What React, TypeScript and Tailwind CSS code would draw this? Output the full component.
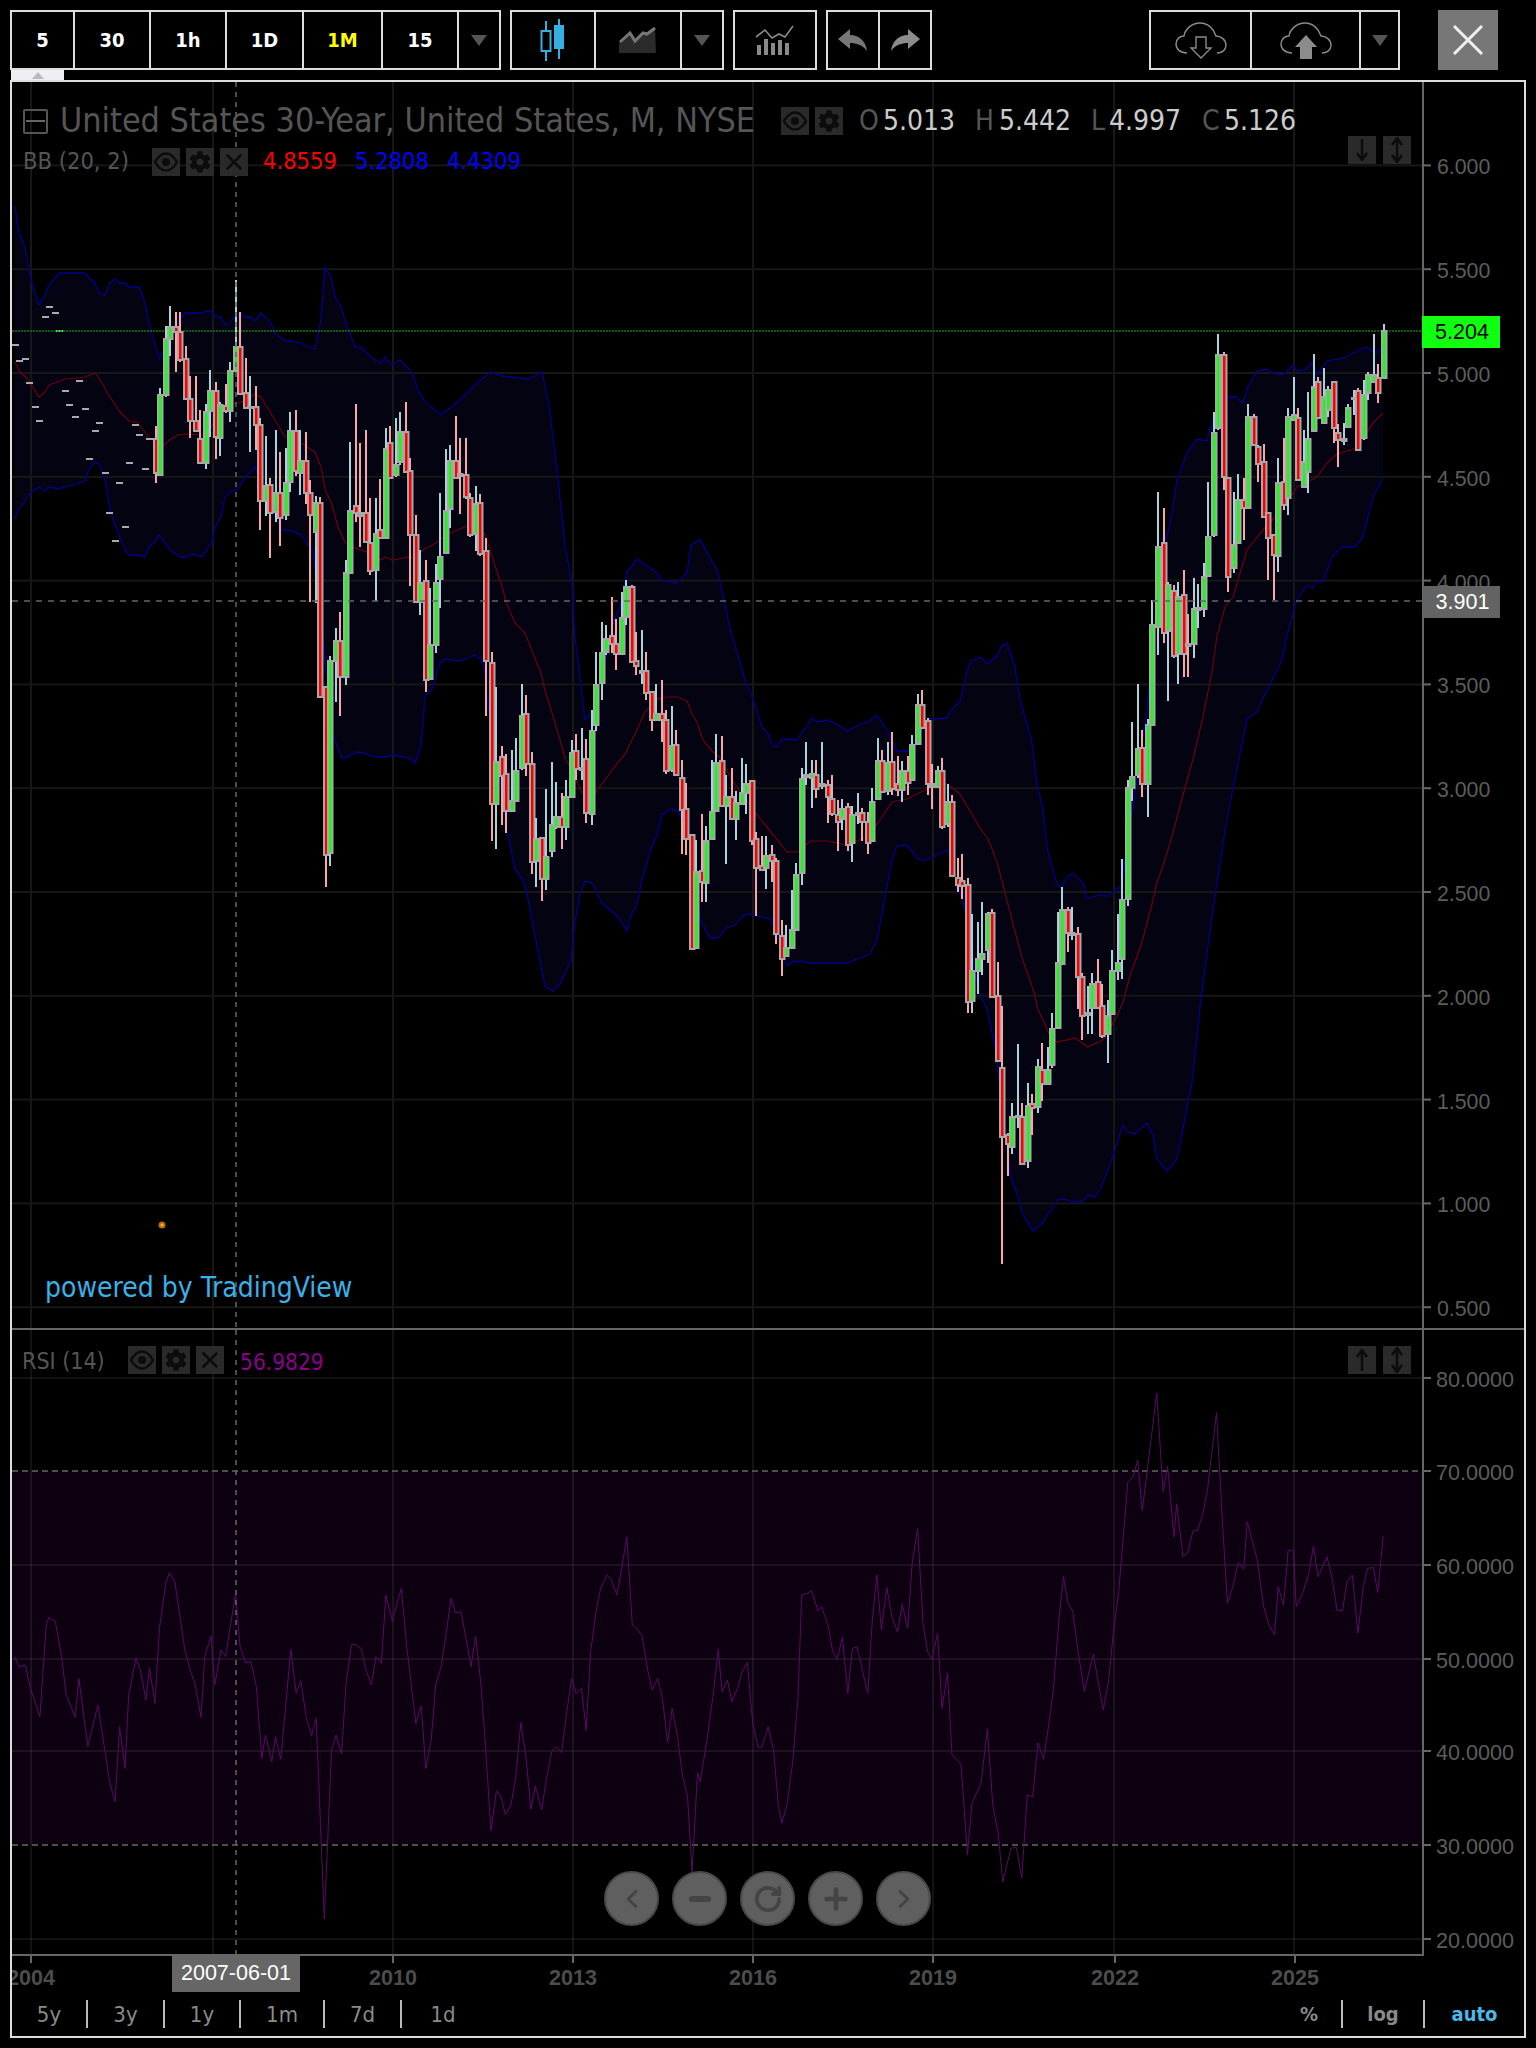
import React from "react";
import { ChevronLeft, ChevronRight, Minus, Plus, RotateCw, X } from "lucide-react";
import { FaCog } from "react-icons/fa";

const C: number[][] = [
[426,439,473,483,0],[388,395,475,475,1],[326,339,395,397,1],[306,327,339,356,1],[312,327,332,372,0],[312,332,360,362,0],[346,359,399,399,0],[376,399,421,438,0],[376,421,431,432,0],[410,439,463,463,0],
[404,412,463,469,1],[370,391,411,437,1],[382,391,437,459,0],[402,405,438,456,1],[384,406,411,413,0],[362,371,411,422,1],[280,347,371,371,1],[312,347,394,394,0],[358,393,408,408,0],[376,407,408,452,1],
[386,407,425,450,0],[418,425,501,530,0],[436,486,501,516,1],[478,485,513,558,0],[430,493,512,522,1],[452,493,518,546,0],[448,483,515,520,1],[412,431,482,492,1],[410,431,471,476,0],[430,461,473,495,1],
[432,461,493,504,0],[480,493,515,602,0],[496,503,532,603,1],[497,503,697,697,0],[687,687,855,887,0],[656,661,853,866,1],[628,641,661,702,1],[612,641,677,716,0],[560,573,677,685,1],[442,511,573,573,1],
[404,506,513,522,0],[443,513,516,547,0],[430,513,542,542,0],[498,543,571,575,0],[498,534,570,601,1],[479,530,538,538,0],[428,449,538,538,1],[426,443,478,478,0],[418,465,475,477,1],[412,432,462,465,1],
[402,432,472,472,0],[458,471,535,586,0],[515,535,602,602,0],[550,583,602,615,1],[560,581,680,692,0],[588,645,679,679,1],[564,583,645,653,1],[493,557,579,608,1],[449,511,553,553,1],[445,461,509,528,1],
[416,461,478,478,0],[438,474,476,514,0],[438,475,497,499,0],[493,498,535,537,0],[486,504,534,551,1],[494,503,554,556,0],[538,551,661,716,0],[652,663,804,841,0],[687,762,804,849,1],[746,757,776,825,0],
[754,774,811,833,0],[750,801,811,811,1],[738,771,801,801,1],[684,716,768,770,1],[695,714,764,776,0],[752,764,862,874,0],[818,839,861,887,1],[838,838,879,901,0],[789,857,879,890,1],[762,825,851,857,1],
[782,817,827,829,1],[793,817,827,849,0],[780,797,827,840,1],[740,753,797,797,1],[734,751,769,780,0],[728,768,770,780,1],[739,759,813,823,0],[710,731,814,825,1],[652,685,725,731,1],[622,653,683,700,1],
[625,639,652,655,1],[597,636,644,653,0],[619,644,654,670,0],[592,618,654,654,1],[580,587,617,625,1],[585,587,662,662,0],[632,661,666,675,0],[630,671,673,684,1],[652,671,693,700,0],[692,692,720,731,0],
[684,714,720,720,1],[680,714,720,742,0],[710,720,771,774,0],[706,746,770,772,1],[730,745,775,775,0],[760,778,810,854,0],[783,809,839,855,0],[835,835,949,949,0],[840,872,948,948,1],[814,871,882,902,0],
[826,841,883,902,1],[760,812,839,839,1],[734,763,811,811,1],[736,761,806,806,0],[775,797,806,864,1],[768,797,819,819,0],[791,803,819,840,1],[758,793,804,804,1],[764,784,793,814,1],[781,781,841,845,0],
[832,839,868,916,0],[836,866,870,871,0],[836,856,868,889,1],[845,855,861,882,0],[858,861,934,944,0],[920,936,959,976,0],[925,948,956,956,1],[890,930,948,948,1],[863,875,930,930,1],[768,779,873,885,1],
[742,775,777,785,1],[760,774,778,808,1],[760,775,789,798,0],[742,784,786,789,1],[780,785,797,823,0],[775,799,814,816,0],[800,815,822,851,0],[799,809,819,830,1],[803,807,845,851,0],[806,815,843,862,1],
[793,813,815,824,1],[808,813,822,841,0],[812,822,843,854,0],[788,802,841,841,1],[738,761,799,799,1],[750,761,792,792,0],[742,763,791,795,1],[732,762,789,795,0],[756,784,790,796,0],[761,771,790,802,1],
[756,771,783,795,0],[735,745,780,780,1],[694,705,744,744,1],[690,705,728,728,0],[718,721,784,795,0],[764,784,787,809,0],[766,771,787,787,1],[758,771,827,829,0],[784,802,824,827,1],[795,802,876,876,0],
[858,878,885,892,0],[854,881,886,899,0],[878,885,1002,1013,0],[914,971,1001,1013,1],[922,959,971,994,1],[902,954,959,975,1],[912,914,950,963,1],[909,913,997,997,0],[962,996,1061,1061,0],[1006,1068,1137,1264,0],
[1133,1135,1144,1176,0],[1103,1117,1147,1154,1],[1044,1116,1117,1128,1],[1103,1117,1164,1165,0],[1083,1106,1161,1168,1],[1094,1104,1108,1135,0],[1059,1067,1107,1113,1],[1043,1070,1084,1101,0],[1047,1070,1084,1084,1],[1013,1029,1065,1068,1],
[912,963,1028,1028,1],[887,910,964,964,1],[907,910,933,952,0],[907,933,935,940,1],[927,934,977,1009,0],[973,977,1016,1040,0],[986,1013,1015,1034,1],[973,984,1008,1034,1],[959,982,1008,1008,0],[984,1006,1036,1038,0],
[1000,1016,1034,1063,1],[950,971,1014,1014,1],[914,963,971,980,1],[859,900,959,979,1],[780,788,899,906,1],[722,777,788,801,1],[684,749,775,778,1],[730,748,784,797,0],[719,725,784,817,1],[600,625,725,725,1],
[492,547,627,655,1],[508,543,633,643,0],[582,585,631,701,1],[585,591,656,658,0],[582,597,654,684,1],[570,595,654,677,0],[614,644,646,677,0],[578,609,644,658,1],[584,608,610,628,1],[563,577,609,617,1],
[482,537,576,576,1],[412,433,535,537,1],[334,355,428,430,1],[352,355,477,490,0],[478,478,577,592,0],[492,545,568,573,1],[474,500,543,543,1],[478,500,508,540,0],[404,417,508,508,1],[414,417,445,445,0],
[445,447,464,482,0],[444,462,517,517,0],[513,513,538,580,0],[535,535,555,600,0],[458,483,556,572,1],[438,482,505,510,0],[408,417,498,515,1],[377,415,420,420,1],[408,418,480,480,0],[430,462,487,487,1],
[392,439,472,493,1],[354,387,431,431,1],[377,382,418,418,0],[368,397,423,423,1],[386,390,410,417,1],[381,382,428,443,0],[424,433,440,467,0],[423,439,441,445,1],[404,408,427,427,1],[390,398,399,415,1],
[388,391,450,451,0],[380,395,438,440,1],[372,375,393,400,1],[334,375,382,383,1],[364,378,393,403,0],[324,331,378,378,1],
];

const DASHES: number[][] = [[15,345],[19,361],[25,359],[29,383],[35,407],[39,421],[45,317],[49,307],[55,313],[59,331],[65,391],[69,405],[75,417],[79,381],[85,409],[89,459],[95,431],[99,423],[105,473],[109,513],[115,541],[119,483],[125,527],[129,463],[135,425],[139,435],[145,469],[149,439]];

const UP: number[][] = [[15,206],[19,232],[25,248],[29,270],[33,287],[39,305],[45,295],[49,285],[59,273],[85,273],[89,278],[95,283],[99,293],[105,295],[110,283],[115,279],[119,283],[125,283],[129,287],[139,287],[145,303],[149,323],[159,359],[165,347],[170,328],[175,325],[185,313],[202,313],[206,311],[211,311],[215,316],[221,317],[225,325],[230,323],[236,314],[241,314],[245,317],[251,317],[255,321],[261,313],[271,323],[275,333],[285,341],[291,341],[301,343],[309,347],[315,349],[321,320],[325,267],[331,277],[335,297],[341,307],[346,323],[355,347],[360,347],[375,360],[381,363],[385,357],[391,365],[400,360],[412,372],[418,390],[425,402],[441,415],[460,400],[475,385],[490,372],[503,376],[529,379],[542,372],[549,405],[557,471],[565,546],[572,582],[575,637],[585,720],[593,710],[605,661],[613,623],[620,606],[627,572],[637,559],[647,566],[657,573],[662,581],[677,583],[687,573],[691,545],[700,540],[708,554],[717,570],[720,582],[730,628],[745,680],[753,699],[762,727],[768,734],[772,745],[777,747],[780,741],[787,739],[797,740],[812,718],[817,722],[828,720],[840,726],[847,731],[863,723],[868,722],[877,715],[888,732],[897,751],[908,751],[918,735],[930,719],[947,718],[950,711],[955,706],[960,701],[967,671],[971,661],[981,657],[987,664],[997,656],[1001,647],[1007,643],[1015,667],[1020,699],[1032,743],[1037,784],[1043,810],[1047,848],[1057,884],[1062,888],[1067,877],[1073,873],[1083,883],[1087,899],[1098,895],[1107,896],[1122,885],[1128,833],[1134,801],[1148,699],[1163,538],[1167,537],[1172,513],[1177,480],[1187,453],[1197,439],[1207,441],[1212,423],[1226,397],[1236,397],[1243,403],[1248,387],[1257,371],[1267,369],[1272,373],[1283,375],[1293,365],[1297,371],[1305,370],[1312,362],[1317,375],[1327,361],[1343,358],[1357,351],[1367,347],[1375,353],[1383,348]];

const LOW: number[][] = [[15,519],[19,508],[24,503],[30,493],[39,487],[45,491],[49,487],[59,489],[69,486],[85,481],[89,469],[95,463],[99,464],[105,479],[110,510],[115,525],[125,550],[129,555],[137,555],[145,557],[149,547],[155,542],[159,535],[170,550],[180,557],[185,557],[193,554],[202,557],[212,542],[215,527],[221,517],[225,498],[230,492],[237,490],[245,478],[255,467],[261,483],[275,516],[282,530],[293,531],[301,535],[313,552],[323,640],[333,736],[342,758],[345,758],[357,752],[363,753],[375,757],[385,757],[393,755],[410,758],[415,763],[421,746],[425,696],[432,689],[440,663],[445,659],[460,661],[475,655],[483,661],[490,720],[500,780],[507,831],[515,869],[523,880],[527,894],[537,946],[545,987],[553,991],[560,984],[571,960],[575,922],[580,894],[585,881],[592,883],[602,903],[617,916],[627,931],[630,918],[637,904],[642,880],[650,851],[657,835],[662,815],[670,809],[678,811],[690,839],[700,920],[710,938],[718,938],[727,928],[735,925],[742,917],[748,914],[770,919],[777,933],[787,966],[792,962],[802,961],[807,963],[847,963],[857,959],[870,954],[877,940],[887,887],[892,860],[897,846],[907,845],[917,858],[925,861],[937,855],[948,850],[965,910],[978,990],[987,1009],[995,1047],[1003,1110],[1010,1174],[1018,1197],[1022,1213],[1033,1231],[1043,1223],[1047,1215],[1053,1208],[1057,1200],[1063,1199],[1073,1202],[1083,1201],[1088,1195],[1095,1197],[1100,1189],[1104,1180],[1113,1156],[1123,1125],[1127,1132],[1135,1134],[1147,1123],[1153,1136],[1157,1159],[1167,1171],[1177,1159],[1192,1083],[1200,1007],[1207,953],[1217,882],[1227,819],[1233,788],[1247,719],[1257,712],[1260,705],[1282,660],[1287,635],[1297,600],[1307,585],[1313,588],[1317,581],[1323,582],[1332,557],[1342,547],[1355,547],[1363,537],[1373,497],[1383,478]];

const MID: number[][] = [[15,362],[20,372],[27,378],[39,397],[45,392],[49,385],[65,379],[77,378],[85,377],[95,373],[100,380],[110,397],[120,412],[129,421],[137,422],[145,432],[149,438],[163,446],[170,440],[178,435],[185,434],[200,435],[210,430],[220,407],[245,401],[255,394],[261,397],[267,407],[275,420],[285,437],[293,438],[315,452],[321,467],[325,489],[332,505],[338,527],[345,542],[355,548],[367,552],[380,560],[385,557],[392,560],[400,559],[407,557],[415,558],[424,549],[433,545],[440,540],[448,534],[460,529],[467,526],[475,526],[485,534],[495,566],[502,586],[506,602],[515,623],[525,633],[532,651],[541,673],[545,691],[553,716],[560,740],[565,758],[572,770],[582,793],[595,793],[608,776],[612,770],[625,754],[635,734],[645,712],[658,699],[667,697],[678,697],[687,701],[692,714],[697,722],[703,740],[712,751],[720,758],[733,781],[753,810],[767,827],[787,852],[798,852],[810,841],[827,841],[847,845],[867,837],[880,820],[892,802],[907,799],[927,789],[947,784],[960,794],[980,828],[988,839],[997,862],[1005,893],[1022,958],[1033,989],[1038,1009],[1050,1036],[1057,1042],[1075,1038],[1088,1047],[1103,1040],[1117,1016],[1123,1002],[1130,976],[1142,942],[1152,904],[1157,882],[1163,866],[1173,833],[1183,795],[1193,759],[1202,721],[1212,672],[1217,636],[1225,607],[1233,597],[1247,550],[1263,530],[1282,510],[1297,487],[1317,477],[1327,463],[1337,454],[1357,448],[1373,423],[1383,413]];

const RSI: number[][] = [[5,830],[10,860],[17,855],[22,920],[33,1010],[40,735],[43,712],[50,725],[57,830],[62,945],[72,1012],[76,895],[86,1100],[97,975],[110,1205],[116,1265],[121,1040],[127,1165],[131,945],[139,835],[144,870],[150,960],[154,865],[160,970],[165,745],[172,610],[176,578],[182,605],[193,810],[200,880],[204,910],[211,1012],[215,830],[222,768],[226,915],[233,810],[238,830],[249,640],[254,800],[260,848],[266,845],[272,920],[278,1135],[282,1065],[289,1145],[293,1070],[299,1138],[310,808],[316,940],[321,902],[327,1010],[333,1068],[338,1015],[347,1617],[355,1110],[360,1065],[366,1122],[371,910],[377,795],[381,793],[388,808],[393,870],[399,915],[404,830],[410,850],[415,645],[422,722],[432,625],[438,800],[448,1030],[454,978],[459,1165],[465,1080],[470,915],[476,860],[482,750],[487,655],[492,698],[498,695],[503,770],[509,860],[514,768],[520,915],[525,1100],[531,1352],[537,1232],[542,1250],[547,1305],[553,1275],[558,1200],[564,1028],[570,1140],[575,1288],[580,1218],[587,1290],[592,1200],[598,1115],[603,1100],[609,1118],[614,1010],[620,895],[625,940],[631,925],[636,1052],[641,815],[647,695],[652,625],[659,585],[664,600],[670,645],[675,570],[681,470],[687,735],[692,745],[698,770],[704,870],[709,930],[715,895],[720,950],[726,1088],[731,985],[737,1070],[742,1180],[748,1250],[753,1476],[759,1178],[762,1205],[770,1070],[776,950],[782,808],[786,935],[792,900],[797,965],[803,925],[809,870],[814,848],[820,1030],[826,1102],[830,1102],[837,1040],[843,1110],[848,1270],[852,1330],[858,1270],[864,1150],[870,950],[874,645],[880,640],[885,632],[892,692],[896,680],[903,735],[908,810],[913,838],[919,772],[925,940],[930,805],[935,800],[941,870],[947,940],[952,720],[957,585],[962,750],[968,622],[974,715],[980,755],[985,672],[991,745],[996,550],[1002,445],[1008,730],[1013,815],[1018,838],[1024,760],[1029,985],[1035,880],[1040,1125],[1046,1140],[1050,1155],[1057,1425],[1062,1270],[1072,1210],[1079,1048],[1085,1275],[1091,1360],[1096,1506],[1105,1405],[1111,1402],[1117,1495],[1123,1245],[1129,1250],[1135,1088],[1141,1138],[1146,1050],[1152,925],[1158,720],[1163,590],[1168,670],[1173,692],[1179,810],[1186,935],[1196,822],[1207,990],[1213,900],[1218,760],[1224,635],[1234,308],[1240,290],[1245,240],[1250,392],[1256,260],[1266,40],[1273,335],[1278,258],[1285,470],[1288,372],[1295,530],[1300,520],[1306,452],[1311,452],[1317,400],[1322,330],[1332,98],[1338,400],[1344,670],[1350,620],[1356,548],[1362,568],[1366,425],[1377,540],[1384,680],[1390,735],[1396,765],[1400,620],[1406,675],[1411,512],[1417,512],[1420,680],[1427,640],[1434,580],[1439,498],[1444,590],[1454,530],[1460,600],[1465,690],[1471,693],[1476,605],[1482,585],[1488,760],[1494,620],[1499,565],[1505,562],[1510,637],[1516,468]];

const pts = (a: number[][]) => a.map((p) => p.join(",")).join(" ");
const XG = [31, 213, 393, 573, 753, 933, 1114, 1294];
const PRICES = ["6.000", "5.500", "5.000", "4.500", "4.000", "3.500", "3.000", "2.500", "2.000", "1.500", "1.000", "0.500"];
const RS = [[80, 1378], [70, 1471], [60, 1565], [50, 1659], [40, 1751], [30, 1845], [20, 1939]];
const YEARS = [[2004, 31], [2010, 393], [2013, 573], [2016, 753], [2019, 933], [2022, 1115], [2025, 1295]];

const cond = "font-['DejaVu_Sans_Condensed','DejaVu_Sans',sans-serif]";

function Candles() {
  return (
    <g>
      {C.map(([h, t, b, l, g], k) => {
        const x = 2 * Math.round((155 + 5.015 * k) / 2);
        return (
          <g key={k}>
            <rect x={x - 1} y={h} width={2} height={l - h} fill={g ? "#a9d3d8" : "#f7a6ab"} />
            <rect x={x - 3} y={t - 1} width={6.5} height={Math.max(b - t + 2, 3)} fill="#a8a8a8" />
            {b - t > 3 && <rect x={x - 1} y={t + 1} width={2.5} height={b - t - 2} fill={g ? "#10ff10" : "#ff0000"} />}
          </g>
        );
      })}
    </g>
  );
}

function MainChart() {
  return (
    <svg viewBox="12 82 1512 1246" className="block w-[1512px] h-[1246px] font-['Liberation_Sans',sans-serif]">
      <polygon points={pts([...UP, ...[...LOW].reverse()])} fill="#030312" />
      {XG.map((x) => <rect key={x} x={x - 1} y={82} width={2} height={1246} fill="#171717" />)}
      {PRICES.map((p, i) => {
        const y = 165.4 + i * 103.8;
        return (
          <g key={p}>
            <rect x={12} y={y - 1} width={1411} height={2} fill="#171717" />
            <rect x={1423} y={y - 1} width={8} height={2} fill="#666" />
            <text x={1437} y={y + 9} className="text-[21.3px] fill-[#5c5c5c]">{p}</text>
          </g>
        );
      })}
      <polyline points={pts(MID)} fill="none" stroke="#6a0010" strokeWidth={1.2} />
      <polyline points={pts(UP)} fill="none" stroke="#00008f" strokeWidth={1.3} />
      <polyline points={pts(LOW)} fill="none" stroke="#00008f" strokeWidth={1.3} />
      {DASHES.map(([x, y], i) => <rect key={i} x={x - 3} y={y - 1} width={7} height={2} fill={x === 59 ? "#7fd47f" : "#aaaaaa"} />)}
      <line x1={12} x2={1423} y1={331} y2={331} stroke="#0a7d0a" strokeWidth={1.6} strokeDasharray="2 1" />
      <Candles />
      <line x1={12} x2={1423} y1={601} y2={601} stroke="#666" strokeWidth={1.5} strokeDasharray="6 6" />
      <line x1={236} x2={236} y1={82} y2={1328} stroke="#666" strokeWidth={1.5} strokeDasharray="5 5" />
      <rect x={1422} y={82} width={2} height={1246} fill="#666" />
      <circle cx={162} cy={1225} r={3.5} fill="#b86a10" />
      <circle cx={162} cy={1225} r={1.6} fill="#f5b020" />
    </svg>
  );
}

function RsiChart() {
  return (
    <svg viewBox="12 1330 1512 626" className="block w-[1512px] h-[626px] font-['Liberation_Sans',sans-serif]">
      <rect x={12} y={1471} width={1411} height={374} fill="#0d0010" />
      {XG.map((x) => <rect key={x} x={x - 1} y={1330} width={2} height={625} fill="#ffffff" fillOpacity={0.07} />)}
      {RS.map(([r, y]) => (
        <g key={r}>
          {r === 70 || r === 30 ? (
            <line x1={12} x2={1423} y1={y} y2={y} stroke="#666" strokeWidth={1.6} strokeDasharray="6 4" />
          ) : (
            <rect x={12} y={y - 1} width={1411} height={2} fill="#ffffff" fillOpacity={0.07} />
          )}
          <rect x={1423} y={y - 1} width={8} height={2} fill="#666" />
          <text x={1436} y={y + 8.5} className="text-[21.6px] fill-[#5c5c5c]">{r}.0000</text>
        </g>
      ))}
      <polyline points={RSI.map(([x, y]) => `${10 + x / 1.104},${1380 + y / 3}`).join(" ")} fill="none" stroke="#5a0a66" strokeWidth={1} />
      <line x1={236} x2={236} y1={1330} y2={1954} stroke="#666" strokeWidth={1.5} strokeDasharray="5 5" />
      <rect x={1422} y={1330} width={2} height={626} fill="#666" />
      <rect x={12} y={1954} width={1412} height={2} fill="#666" />
    </svg>
  );
}

function TimeAxis() {
  return (
    <svg viewBox="12 1956 1512 40" className="block w-[1512px] h-[40px] font-['Liberation_Sans',sans-serif]">
      {YEARS.map(([y, x]) => (
        <g key={y}>
          <rect x={x - 1} y={1956} width={2} height={7} fill="#666" />
          <text x={x} y={1985} textAnchor="middle" className="text-[21.6px] font-bold fill-[#4c4c4c]">{y}</text>
        </g>
      ))}
    </svg>
  );
}

function Tile({ children }: { children: React.ReactNode }) {
  return <div className="w-[28px] h-[28px] flex items-center justify-center bg-[#2a2a2a] text-[#0c0c0c]">{children}</div>;
}
const EyeI = () => (
  <svg width="24" height="20" viewBox="0 0 24 20">
    <path d="M1 10 C5 3 9 1.5 12 1.5 C15 1.5 19 3 23 10 C19 17 15 18.5 12 18.5 C9 18.5 5 17 1 10 Z" fill="none" stroke="#0c0c0c" strokeWidth="2.5" />
    <circle cx="12" cy="10" r="4" fill="#0c0c0c" />
  </svg>
);
const Trio = () => (
  <div className="flex gap-[6px]">
    <Tile><EyeI /></Tile>
    <Tile><FaCog size={22} /></Tile>
    <Tile><X size={26} strokeWidth={2.5} /></Tile>
  </div>
);
const Tri = () => <div className="w-0 h-0 border-l-[8px] border-r-[8px] border-t-[11px] border-l-transparent border-r-transparent border-t-[#555]" />;

function Cell({ w, children, last, color }: { w: string; children: React.ReactNode; last?: boolean; color?: string }) {
  return (
    <div className={`${w} h-full flex items-center justify-center ${last ? "" : "border-r-2 border-[#ddd]"} ${cond} text-[20px] font-bold ${color ?? "text-white"}`}>
      {children}
    </div>
  );
}
const Cloud = () => <path d="M12 31 C5 31 1 27 1 22 C1 17 5 14 9 14 C10 7 17 1 25 1 C33 1 39 7 41 14 C46 14 51 18 51 23 C51 28 47 31 42 31" fill="none" stroke="#8a8a8a" strokeWidth="1.4" />;

function Toolbar() {
  return (
    <div className="h-[70px] pt-[10px] pl-[10px] flex">
      <div className="flex h-[60px] border-2 border-[#ddd] w-[491px]">
        <Cell w="w-[63px]">5</Cell>
        <Cell w="w-[76px]">30</Cell>
        <Cell w="w-[76px]">1h</Cell>
        <Cell w="w-[77px]">1D</Cell>
        <Cell w="w-[79px]" color="text-[#ffff00]">1M</Cell>
        <Cell w="w-[76px]">15</Cell>
        <Cell w="flex-1" last><Tri /></Cell>
      </div>
      <div className="flex h-[60px] border-2 border-[#ddd] w-[214px] ml-[9px]">
        <Cell w="w-[84px]">
          <svg width="28" height="42" viewBox="0 0 28 42">
            <path d="M7 2 V12 M7 32 V42" stroke="#35aee2" strokeWidth="2" />
            <rect x="2.5" y="12" width="9" height="20" fill="none" stroke="#35aee2" strokeWidth="2" />
            <path d="M20 0 V6 M20 30 V40" stroke="#35aee2" strokeWidth="2" />
            <rect x="15" y="6" width="10" height="24" fill="#35aee2" />
          </svg>
        </Cell>
        <Cell w="w-[86px]">
          <svg width="38" height="26" viewBox="0 0 38 26">
            <path d="M0 16 L11 6 L16 14 L24 6 L28 7 L36 0 L37 26 H0 Z" fill="#2b2b2b" />
            <path d="M1 15 L11 6 L16 14 L24 6 L28 7 L36 1" fill="none" stroke="#777" strokeWidth="3" />
          </svg>
        </Cell>
        <Cell w="flex-1" last><Tri /></Cell>
      </div>
      <div className="flex h-[60px] border-2 border-[#ddd] w-[84px] ml-[9px] items-center justify-center">
        <svg width="40" height="30" viewBox="0 0 40 30">
          <path d="M1 12 L10 5 L17 13 L24 9 L30 12 L38 1" fill="none" stroke="#8a8a8a" strokeWidth="1.6" />
          <path d="M2 20h4v10h-4z M9 14h4v16h-4z M16 18h4v12h-4z M23 15h4v15h-4z M30 18h4v12h-4z" fill="#8a8a8a" />
        </svg>
      </div>
      <div className="flex h-[60px] border-2 border-[#ddd] w-[106px] ml-[9px]">
        <Cell w="w-[52px]">
          <svg width="30" height="22" viewBox="0 0 30 22"><path d="M0 10 L12 0 V6 C22 6 28 13 29 22 C25 16 18 14 12 14 V20 Z" fill="#777" /></svg>
        </Cell>
        <Cell w="flex-1" last>
          <svg width="30" height="22" viewBox="0 0 30 22"><path d="M30 10 L18 0 V6 C8 6 2 13 1 22 C5 16 12 14 18 14 V20 Z" fill="#8c8c8c" /></svg>
        </Cell>
      </div>
      <div className="flex h-[60px] border-2 border-[#ddd] w-[251px] ml-[217px]">
        <Cell w="w-[101px]">
          <svg width="52" height="37" viewBox="0 0 52 37">
            <Cloud />
            <path d="M21 15 H31 V26 H36 L26 36 L16 26 H21 Z" fill="#000" stroke="#8a8a8a" strokeWidth="1.4" />
          </svg>
        </Cell>
        <Cell w="w-[109px]">
          <svg width="52" height="37" viewBox="0 0 52 37">
            <Cloud />
            <path d="M26 13 L37 25 H32 V37 H20 V25 H15 Z" fill="#8c8c8c" />
          </svg>
        </Cell>
        <Cell w="flex-1" last><Tri /></Cell>
      </div>
      <div className="w-[60px] h-[60px] ml-[38px] bg-[#777] flex items-center justify-center">
        <svg width="32" height="30" viewBox="0 0 32 30"><path d="M2 1 L30 29 M30 1 L2 29" stroke="#eee" strokeWidth="3" /></svg>
      </div>
    </div>
  );
}

function Legend() {
  return (
    <>
      <div className={`absolute left-[11px] top-[25px] flex items-center h-[28px] ${cond}`}>
        <div className="w-[25px] h-[25px] border-2 border-[#555] rounded-[2px] flex items-center justify-center">
          <div className="w-[19px] h-[2px] bg-[#666]" />
        </div>
        <span className="ml-[12px] w-[721px] text-[33.8px] text-[#555] leading-none whitespace-nowrap">United States 30-Year, United States, M, NYSE</span>
        <div className="flex gap-[6px]">
          <Tile><EyeI /></Tile>
          <Tile><FaCog size={22} /></Tile>
        </div>
        <div className="ml-[16px] flex text-[28px] leading-none whitespace-nowrap">
          <span className="w-[24px] text-[#555]">O</span><span className="w-[92px] text-[#ccc]">5.013</span>
          <span className="w-[24px] text-[#555]">H</span><span className="w-[92px] text-[#ccc]">5.442</span>
          <span className="w-[18px] text-[#555]">L</span><span className="w-[93px] text-[#ccc]">4.997</span>
          <span className="w-[22px] text-[#555]">C</span><span className="text-[#ccc]">5.126</span>
        </div>
      </div>
      <div className={`absolute left-[11px] top-[66px] flex items-center h-[28px] ${cond} text-[23.5px] leading-none`}>
        <span className="w-[129px] text-[#555] whitespace-nowrap">BB (20, 2)</span>
        <Trio />
        <span className="ml-[15px] w-[92px] text-[#ff0000]">4.8559</span>
        <span className="w-[92px] text-[#0000ff]">5.2808</span>
        <span className="text-[#0000ff]">4.4309</span>
      </div>
      <div className="absolute left-[1336px] top-[54px] flex gap-[7px]">
        <Tile>
          <svg width="12" height="22" viewBox="0 0 12 22"><path d="M6 0 V20 M1 14 L6 21 L11 14" fill="none" stroke="#0c0c0c" strokeWidth="2.5" /></svg>
        </Tile>
        <Tile>
          <svg width="12" height="26" viewBox="0 0 12 26"><path d="M6 2 V24 M1 8 L6 1 L11 8 M1 18 L6 25 L11 18" fill="none" stroke="#0c0c0c" strokeWidth="2.5" /></svg>
        </Tile>
      </div>
      <div className={`absolute left-[33px] top-[1189px] ${cond} text-[28px] leading-[34px] text-[#3bb0e6] whitespace-nowrap`}>powered by TradingView</div>
      <div className="absolute left-[1410px] top-[234px] w-[78px] h-[32px] pl-[2px] bg-[#10ff10] flex items-center justify-center font-['Liberation_Sans',sans-serif] text-[21.5px] text-black">5.204</div>
      <div className="absolute left-[1411px] top-[504px] w-[77px] h-[32px] pl-[2px] bg-[#636363] flex items-center justify-center font-['Liberation_Sans',sans-serif] text-[21.5px] text-white">3.901</div>
    </>
  );
}

function RsiLegend() {
  return (
    <>
      <div className={`absolute left-[10px] top-[17px] flex items-center h-[28px] ${cond} text-[23px] leading-none`}>
        <span className="w-[106px] text-[#555] whitespace-nowrap">RSI (14)</span>
        <div className="-mt-[2px]"><Trio /></div>
        <span className="ml-[16px] pt-[3px] text-[22.5px] text-[#8b008b]">56.9829</span>
      </div>
      <div className="absolute left-[1336px] top-[16px] flex gap-[7px]">
        <Tile>
          <svg width="12" height="22" viewBox="0 0 12 22"><path d="M6 22 V2 M1 8 L6 1 L11 8" fill="none" stroke="#0c0c0c" strokeWidth="2.5" /></svg>
        </Tile>
        <Tile>
          <svg width="12" height="26" viewBox="0 0 12 26"><path d="M6 2 V24 M1 8 L6 1 L11 8 M1 18 L6 25 L11 18" fill="none" stroke="#0c0c0c" strokeWidth="2.5" /></svg>
        </Tile>
      </div>
      <div className="absolute left-[592px] top-[541px] flex gap-[13px]">
        {[<ChevronLeft key="a" size={30} strokeWidth={2.5} />, <Minus key="b" size={28} strokeWidth={5} />, <RotateCw key="c" size={30} strokeWidth={3} />, <Plus key="d" size={32} strokeWidth={3.5} />, <ChevronRight key="e" size={30} strokeWidth={2.5} />].map((ic, i) => (
          <div key={i} className="w-[55px] h-[55px] rounded-full bg-[#5f5f5f] border-2 border-[#484848] flex items-center justify-center text-[#444]">{ic}</div>
        ))}
      </div>
    </>
  );
}

function BottomBar() {
  const left: [string, string][] = [["5y", "w-[76px]"], ["3y", "w-[77px]"], ["1y", "w-[76px]"], ["1m", "w-[84px]"], ["7d", "w-[77px]"], ["1d", "w-[82px]"]];
  return (
    <div className={`h-[40px] flex items-start pt-[4px] ${cond} text-[22px] text-[#8a8a8a]`}>
      {left.map(([t, w], i) => (
        <div key={t} className={`${w} h-[28px] flex items-center justify-center ${i < 5 ? "border-r-2 border-[#bbb]" : ""}`}>{t}</div>
      ))}
      <div className="ml-auto w-[66px] h-[28px] flex items-center justify-center border-r-2 border-[#bbb] text-[20px] font-bold">%</div>
      <div className="w-[82px] h-[28px] flex items-center justify-center border-r-2 border-[#bbb] text-[20px] font-bold">log</div>
      <div className="w-[99px] h-[28px] flex items-center justify-center text-[20px] font-bold text-[#4db8e8]">auto</div>
    </div>
  );
}

export default function App() {
  return (
    <div className="w-[1536px] h-[2048px] bg-black overflow-hidden">
      <Toolbar />
      <div className="h-[10px] pl-[11px]">
        <div className="w-[53px] h-[10px] bg-[#eeeef4] flex items-center justify-center">
          <div className="w-0 h-0 border-l-[6px] border-r-[6px] border-b-[7px] border-l-transparent border-r-transparent border-b-[#bbb]" />
        </div>
      </div>
      <div className="ml-[10px] w-[1516px] h-[1958px] border-2 border-[#ddd]">
        <div className="relative h-[1248px] border-b-2 border-[#666]">
          <MainChart />
          <Legend />
        </div>
        <div className="relative h-[626px]">
          <RsiChart />
          <RsiLegend />
        </div>
        <div className="relative h-[40px]">
          <TimeAxis />
          <div className="absolute left-[160px] top-[-1px] w-[128px] h-[37px] bg-[#666] flex items-center justify-center font-['Liberation_Sans',sans-serif] text-[21.5px] text-white">2007-06-01</div>
        </div>
        <BottomBar />
      </div>
    </div>
  );
}
